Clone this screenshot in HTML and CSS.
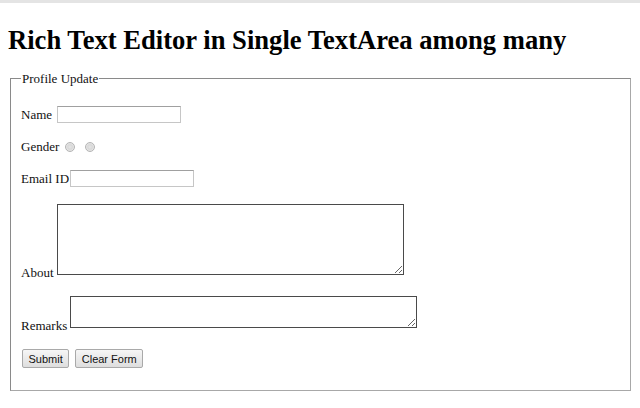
FILE: index.html
```html
<!DOCTYPE html>
<html>
<head>
<meta charset="utf-8">
<title>Rich Text Editor</title>
<link rel="stylesheet" href="styles.css">
</head>
<body>
<div class="topbar"></div>
<div class="page">
  <h1 class="title">Rich Text Editor in Single TextArea among many</h1>
  <form class="form">
    <fieldset class="box">
      <legend class="legend">Profile Update</legend>
      <div class="row row-name">
        <label class="lbl" for="name">Name</label>
        <input class="text" id="name" type="text">
      </div>
      <div class="row row-gender">
        <span class="lbl">Gender</span>
        <input class="radio" type="radio" name="g">
        <input class="radio" type="radio" name="g">
      </div>
      <div class="row row-email">
        <label class="lbl" for="email">Email ID</label>
        <input class="text" id="email" type="text">
      </div>
      <div class="row row-end row-about">
        <label class="lbl lbl-low" for="about">About</label>
        <textarea class="area area-about" id="about"></textarea>
      </div>
      <div class="row row-end row-remarks">
        <label class="lbl lbl-low" for="remarks">Remarks</label>
        <textarea class="area area-remarks" id="remarks"></textarea>
      </div>
      <div class="row buttons">
        <button class="btn" type="button">Submit</button>
        <button class="btn" type="button">Clear Form</button>
      </div>
    </fieldset>
  </form>
</div>
</body>
</html>
```

FILE: styles.css
```css
html, body {
  margin: 0;
  padding: 0;
  background: #fff;
}
body {
  font-family: "Liberation Serif", "Times New Roman", serif;
  font-size: 13px;
  color: #111;
}
.topbar {
  height: 3px;
  background: #e4e4e4;
}
.page {
  padding: 0 8px;
}
.title {
  font-size: 26.6px;
  line-height: 30px;
  font-weight: bold;
  margin: 22px 0 0 0;
  color: #000;
}
.form {
  margin: 16px 0 0 0;
}
.box {
  margin: 0 1px 0 2px;
  border: 1px solid #a8a8a8;
  border-top-color: #8a8a8a;
  border-left-color: #8a8a8a;
  padding: 4px 10px 22px 10px;
}
.legend {
  padding: 0 1px;
  line-height: 15px;
}
.row {
  display: flex;
  align-items: center;
  gap: 3px;
  height: 17px;
  line-height: 15px;
}
.row-name {
  margin-top: 16px;
  gap: 5px;
}
.row-gender {
  margin-top: 15px;
}
.row-email {
  margin-top: 15px;
  gap: 1px;
}
.row-about {
  margin-top: 17px;
  height: auto;
}
.row-remarks {
  margin-top: 21px;
  height: auto;
}
.row-end {
  align-items: flex-end;
}
.lbl {
  display: block;
}
.lbl-low {
  margin-bottom: -5px;
}
.text {
  width: 124px;
  height: 17px;
  box-sizing: border-box;
  border: 1px solid #c6c6c6;
  border-top-color: #a0a0a0;
  margin: 0;
  padding: 0;
}
.radio {
  appearance: none;
  -webkit-appearance: none;
  width: 10px;
  height: 10px;
  margin: 0 0 0 3px;
  border-radius: 50%;
  border: 1px solid #b4b4b4;
  background: radial-gradient(circle, #e6e6e6 0, #d8d8d8 40%, #f4f4f4 100%);
  box-sizing: border-box;
}
.radio + .radio {
  margin-left: 7px;
}
.area {
  box-sizing: border-box;
  border: 1px solid #4a4a4a;
  margin: 0;
  padding: 0;
}
.area-about {
  width: 347px;
  height: 71px;
}
.area-remarks {
  width: 347px;
  height: 32px;
}
.buttons {
  gap: 6px;
  margin-top: 21px;
  height: 19px;
  padding-left: 1px;
}
.btn {
  font-family: "Liberation Sans", Arial, sans-serif;
  font-size: 11px;
  height: 19px;
  padding: 0 5.5px;
  margin: 0;
  border: 1px solid #a9a9a9;
  border-radius: 2px;
  background: linear-gradient(#f6f6f6, #dedede);
  color: #111;
}
```
